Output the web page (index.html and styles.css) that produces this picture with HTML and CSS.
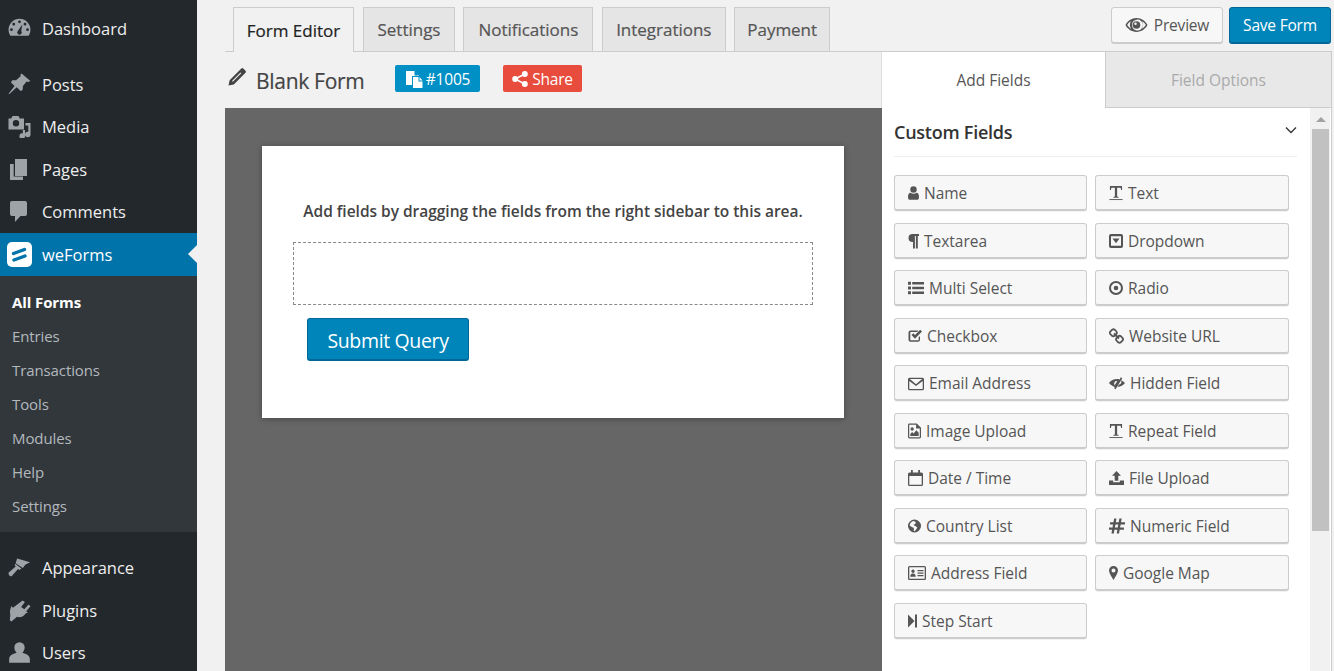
FILE: index.html
```html
<!DOCTYPE html>
<html lang="en">
<head>
<meta charset="utf-8">
<title>weForms</title>
<link rel="stylesheet" href="styles.css">
</head>
<body>
<aside class="sidebar">
  <nav class="menu first">
    <a class="mi"><svg class="mic" viewBox="0 0 20 20"><path fill-rule="evenodd" d="M10 1.500A9.500 9.500 0 0 0 .5 11c0 2 .6 3.700 1.600 5.200h15.800c1-1.500 1.600-3.200 1.600-5.200A9.500 9.500 0 0 0 10 1.500zM10 3a1.200 1.200 0 1 1 0 2.400A1.200 1.200 0 0 1 10 3zM5 5a1.200 1.200 0 1 1 0 2.400A1.200 1.200 0 0 1 5 5zm9.800 0a1.200 1.200 0 1 1 0 2.400 1.200 1.200 0 0 1 0-2.400zM3 9.800a1.200 1.200 0 1 1 0 2.400 1.200 1.200 0 0 1 0-2.400zm14 0a1.200 1.200 0 1 1 0 2.400 1.200 1.200 0 0 1 0-2.400zM12.500 6.500l-1 5.600a2 2 0 1 1-3 0z"/></svg><span>Dashboard</span></a>
  </nav>
  <nav class="menu second">
    <a class="mi"><svg class="mic" viewBox="0 0 20 20"><path d="M11.800.5l7.700 6.500-2 .8-1.300-.4-3.200 4-.3 3.300-1.700 1-3.400-3.300L1 18.500l-.5-.4 5.200-6.900-3.100-3 1.100-1.800 3.300-.2 4-3.300-.2-1.300z"/></svg><span>Posts</span></a>
    <a class="mi"><svg class="mic" viewBox="0 0 23 23"><path fill-rule="evenodd" d="M4.500 1h6l1.300 2.500H16v11H.5v-11h2.700zM8 5a3.200 3.200 0 1 0 0 6.400A3.200 3.200 0 0 0 8 5z"/><path d="M22.500 8v11.500a2.800 2.800 0 1 1-2.200-2.700v-6.300h-2.800V8zM17 15v6a2.800 2.800 0 1 1-2.200-2.700V15z"/></svg><span>Media</span></a>
    <a class="mi"><svg class="mis" viewBox="0 0 17 21"><path d="M5 0h12v17H5z"/><path d="M0 5h3.700v12.500H13V21H0z"/></svg><span>Pages</span></a>
    <a class="mi"><svg class="mis" viewBox="0 0 17 21"><path d="M2 0h13a2 2 0 0 1 2 2v11a2 2 0 0 1-2 2h-4.500L5 21v-6H2a2 2 0 0 1-2-2V2a2 2 0 0 1 2-2z"/></svg><span>Comments</span></a>
    <a class="mi current"><svg class="logo" viewBox="0 0 25 25"><rect width="25" height="25" rx="5" fill="#fff"/><path d="M6.500 11.500l11-4M7 18l11-4" stroke="#0073aa" stroke-width="3.400" stroke-linecap="round" fill="none"/></svg><span>weForms</span></a>
    <div class="submenu">
      <a class="si on">All Forms</a>
      <a class="si">Entries</a>
      <a class="si">Transactions</a>
      <a class="si">Tools</a>
      <a class="si">Modules</a>
      <a class="si">Help</a>
      <a class="si">Settings</a>
    </div>
  </nav>
  <nav class="menu third">
    <a class="mi"><svg class="mic" viewBox="0 0 24 20"><path d="M9.500.5l13.500 4-5 2.500-2.500 3.500-7.500-5zM7.500 6l6.500 5-2 1.500-1.500-1L3.500 19.500l-2.500-1.500-.5-2.500 7.500-6.500-1-1.500z"/></svg><span>Appearance</span></a>
    <a class="mi"><svg class="mic" viewBox="0 0 20 20"><path d="M12.700 1.200l2 1.300-3.300 4.500 2.800 2 3.600-4.300 1.800 1.700-3.800 4.300 1.500 1-2 .8c-1.500 2.500-4.500 4-7.500 3L3 19.500l-1.400-1 .4-5c-.8-2.500 0-5 1-7.500l1.300 1.700z"/></svg><span>Plugins</span></a>
    <a class="mi"><svg class="mic" viewBox="0 0 20 20"><path d="M10 1a4.500 4.500 0 0 1 4.500 4.700c0 2-1 3.500-2 4.500 3.500 1 6.500 2.300 6.500 5.500V19H1v-3.300c0-3.200 3-4.500 6.500-5.500-1-1-2-2.500-2-4.500A4.500 4.500 0 0 1 10 1z"/></svg><span>Users</span></a>
  </nav>
</aside>

<main class="main">
  <header class="topbar">
    <div class="tabs">
      <a class="tab active">Form Editor</a>
      <a class="tab t2">Settings</a>
      <a class="tab t3">Notifications</a>
      <a class="tab t4">Integrations</a>
      <a class="tab t5">Payment</a>
    </div>
    <div class="actions">
      <button class="btn preview"><svg class="eye" viewBox="0 0 24 16"><path fill-rule="evenodd" d="M12 .8C6.800.8 2.600 4 .5 8c2.100 4 6.300 7.200 11.500 7.200S21.400 12 23.500 8C21.400 4 17.200.8 12 .8zM12 2.500a5.700 5.700 0 1 1 0 11.200 5.700 5.700 0 0 1 0-11.200zM2.300 8c1-1.500 2.400-2.900 4-3.800a7 7 0 0 0 0 7.600C4.700 10.900 3.300 9.500 2.300 8zm15.400-3.800c1.600.9 3 2.300 4 3.800-1 1.500-2.400 2.900-4 3.800a7 7 0 0 0 0-7.600z"/><path fill-rule="evenodd" d="M12 4a4 4 0 1 0 0 8 4 4 0 0 0 0-8zm-1 1.500a1.300 1.300 0 1 1 0 2.600 1.300 1.300 0 0 1 0-2.600z"/></svg>Preview</button>
      <button class="btn save">Save Form</button>
    </div>
  </header>

  <div class="workspace">
    <section class="editor">
      <div class="titlebar">
        <svg class="pencil" viewBox="0 0 18 18"><path fill-rule="evenodd" d="M13.300.5a1.500 1.500 0 0 1 2 0l2.200 2.200a1.500 1.500 0 0 1 0 2L5.800 16.400.5 17.500l1.100-5.300zM12.500 4.500L4 13l.8.8L13.300 5.300z"/></svg>
        <h1 class="title">Blank Form</h1>
        <span class="badge id"><svg class="bi doc" viewBox="0 0 18 18"><path d="M1 1h8.500v4.500H14V6H7v9H1z"/><path fill-rule="evenodd" d="M8 7h5.500v4.500H17.500V18H8zm6.500 0l3 3.400h-3z"/></svg>#1005</span>
        <span class="badge share"><svg class="bi" viewBox="0 0 16 16"><circle cx="3.200" cy="8" r="3"/><circle cx="12.800" cy="3" r="3"/><circle cx="12.800" cy="13" r="3"/><path d="M3.200 8l9.600-5M3.200 8l9.600 5" stroke="#fff" stroke-width="1.600"/></svg>Share</span>
      </div>
      <div class="canvas">
        <div class="card">
          <p class="hint">Add fields by dragging the fields from the right sidebar to this area.</p>
          <div class="drop"></div>
          <button class="submit">Submit Query</button>
        </div>
      </div>
    </section>

    <aside class="panel">
      <div class="ptabs">
        <a class="ptab on">Add Fields</a>
        <a class="ptab off">Field Options</a>
      </div>
      <div class="pbody">
        <div class="pcontent">
          <div class="phead">
            <h2>Custom Fields</h2>
            <svg class="chev" viewBox="0 0 12 8"><path d="M1 1.500l5 5 5-5" fill="none" stroke="#333" stroke-width="1.300"/></svg>
          </div>
          <div class="fields">
            <a class="f"><svg class="i w11" viewBox="0 0 13 16"><path d="M6.500 0a3.800 3.800 0 1 1 0 7.600A3.800 3.800 0 0 1 6.500 0zM3 7.600c1 .9 2.200 1.300 3.500 1.300S9 8.500 10 7.600c2 .3 3 1.600 3 5 0 2.200-1 3.400-2.500 3.400h-8C1 16 0 14.800 0 12.600c0-3.400 1-4.700 3-5z"/></svg>Name</a>
            <a class="f"><svg class="i w14" viewBox="0 0 15 16"><path d="M1 .5h13v4.300h-1l-.6-2.500H8.700v9.500l1.600.5v.8H4.700v-.8l1.600-.5V2.300H2.600L2 4.800H1z"/><path d="M.5 15h14" stroke="currentColor" stroke-width="1"/></svg>Text</a>
            <a class="f"><svg class="i w11" viewBox="0 0 11 15"><path d="M4.500.5H11v1.900H9.800V15H7.900V2.400H6.900V15H5V8.500h-.5a4 4 0 0 1 0-8z"/></svg>Textarea</a>
            <a class="f"><svg class="i w14" viewBox="0 0 14 14"><path fill-rule="evenodd" d="M2 0h10a2 2 0 0 1 2 2v10a2 2 0 0 1-2 2H2a2 2 0 0 1-2-2V2a2 2 0 0 1 2-2zm0 2.300V11.700h10V2.300zm1.500 2.200h7L7 9.200z"/></svg>Dropdown</a>
            <a class="f"><svg class="i w16" viewBox="0 0 16 13"><path d="M0 .3h3v3H0zM0 5h3v3H0zM0 9.700h3v3H0zM4.200.6H16v2.400H4.200zM4.200 5.300H16v2.400H4.200zM4.200 10H16v2.400H4.200z"/></svg>Multi Select</a>
            <a class="f"><svg class="i w14" viewBox="0 0 14 14"><path fill-rule="evenodd" d="M7 0a7 7 0 1 1 0 14A7 7 0 0 1 7 0zm0 2a5 5 0 1 0 0 10A5 5 0 0 0 7 2zm0 2.700a2.300 2.300 0 1 1 0 4.600 2.300 2.300 0 0 1 0-4.600z"/></svg>Radio</a>
            <a class="f"><svg class="i w14" viewBox="0 0 14 14"><path d="M2.500 1.500h8l-1.400 1.400H2.300V11.300h8.300V8.400L12 7v3.800a2 2 0 0 1-2 2H2.500a2 2 0 0 1-2-2V3.500a2 2 0 0 1 2-2z"/><path d="M3.500 6l1.900-1.800L7 6l5.200-5.200L14 2.600 7 9.800z"/></svg>Checkbox</a>
            <a class="f"><svg class="i w15" viewBox="0 0 15 15"><path d="M3.200 1.200L1.300 3a2 2 0 0 0 0 2.500L3 7.300a2 2 0 0 0 2.600 0l1.800-1.800a2 2 0 0 0 0-2.500L5.700 1.200a2 2 0 0 0-2.500 0zM9.300 7.700l-1.800 1.800a2 2 0 0 0 0 2.500l1.700 1.800a2 2 0 0 0 2.600 0l1.800-1.800a2 2 0 0 0 0-2.500l-1.800-1.800a2 2 0 0 0-2.500 0zM5 5l5 5" fill="none" stroke="currentColor" stroke-width="1.800"/></svg>Website URL</a>
            <a class="f"><svg class="i w16 mt2" viewBox="0 0 16 13"><path fill-rule="evenodd" d="M1.500.2h13a1.500 1.500 0 0 1 1.500 1.500v9.600a1.500 1.500 0 0 1-1.500 1.500h-13A1.500 1.500 0 0 1 0 11.300V1.700A1.500 1.500 0 0 1 1.500.2zm-.2 3.200v7.800c0 .2.100.4.300.4h12.800c.2 0 .3-.2.300-.4V3.400L8 8.600zM1.900 1.500L8 6.700l6.100-5.200z"/></svg>Email Address</a>
            <a class="f"><svg class="i w16" viewBox="0 0 16 13"><path fill-rule="evenodd" d="M8 2.600c.9 0 1.800.1 2.600.4L11.800.8l1.500.9-6.700 11-1.500-.9.700-1.300C3.400 9.600 1.300 8.300 0 6.500 1.700 4.100 4.700 2.600 8 2.600zM7.800 4.600A2.500 2.500 0 0 0 5.700 8.700L8 5z"/><path d="M11.800 3.800C13.600 4.400 15 5.400 16 6.500c-1.600 2.300-4.300 3.700-7.500 3.900l1.300-2.100c1.600-.4 2.500-1.200 2.600-2.700z"/></svg>Hidden Field</a>
            <a class="f"><svg class="i w13" viewBox="0 0 14 16"><path fill-rule="evenodd" d="M1.500 0h8L14 4.500v10a1.500 1.500 0 0 1-1.500 1.500h-11A1.500 1.500 0 0 1 0 14.500v-13A1.500 1.500 0 0 1 1.500 0zm-.2 1.300v13.400h11.400V5.300H8.700V1.300zM4.500 4a1.800 1.800 0 1 1 0 3.600 1.800 1.800 0 0 1 0-3.600zM2.500 13.500v-2.300l2-2 1.500 1.500 3-3.500 2.500 2.800v3.500z"/></svg>Image Upload</a>
            <a class="f"><svg class="i w14" viewBox="0 0 15 16"><path d="M1 .5h13v4.300h-1l-.6-2.500H8.700v9.500l1.600.5v.8H4.700v-.8l1.600-.5V2.300H2.600L2 4.800H1z"/><path d="M.5 15h14" stroke="currentColor" stroke-width="1"/></svg>Repeat Field</a>
            <a class="f"><svg class="i w15" viewBox="0 0 15 16"><path fill-rule="evenodd" d="M3 0h1.800v2.500h5.400V0H12v2.500h1.500A1.500 1.500 0 0 1 15 4v10.500a1.500 1.500 0 0 1-1.500 1.500h-12A1.500 1.500 0 0 1 0 14.500V4a1.500 1.500 0 0 1 1.500-1.500H3zM1.300 6v8.700h12.400V6z"/></svg>Date / Time</a>
            <a class="f"><svg class="i w15" viewBox="0 0 15 14"><path d="M7.500 0l4.500 4.800H9.300v5H5.700v-5H3zM0 9.500h4.200v1.700h6.600V9.500H15V14H0z"/></svg>File Upload</a>
            <a class="f"><svg class="i w13" viewBox="0 0 14 14"><path fill-rule="evenodd" d="M7 0a7 7 0 1 1 0 14A7 7 0 0 1 7 0zM5.500 1.700c-2 .6-3.700 2.500-3.700 4.800l2.200 1.500 1.500.5 1 1.500-.5 2 1.300.7 2-2.700.7-1.500-2-1.500-1.500-.5-.5-1 1.500-.5 1-1.700-1-1.100z"/></svg>Country List</a>
            <a class="f"><svg class="i w16" viewBox="0 0 15 14"><path d="M4.800 0h2.200l-.6 3.500h2.700L9.700 0h2.200l-.6 3.500H15v2.200h-4.100l-.5 2.600H14v2.200h-4l-.6 3.500H7.200l.6-3.500H5.100L4.500 14H2.300l.6-3.500H0V8.300h3.300l.5-2.600H1V3.500h3.200zM6 5.700l-.5 2.600h2.700l.5-2.600z"/></svg>Numeric Field</a>
            <a class="f"><svg class="i w18" viewBox="0 0 18 14"><path fill-rule="evenodd" d="M1.500 0h15A1.500 1.500 0 0 1 18 1.500v11a1.500 1.500 0 0 1-1.500 1.500h-15A1.500 1.500 0 0 1 0 12.500v-11A1.500 1.500 0 0 1 1.500 0zm-.2 1.300v11.400h15.400V1.300zM5 3.500a1.700 1.700 0 1 1 0 3.400 1.700 1.700 0 0 1 0-3.400zM2.300 10.700c0-2 .6-3.300 2.700-3.300s2.700 1.300 2.700 3.300zM9.500 4h6v1.200h-6zM9.500 6.500h6v1.200h-6zM9.500 9h6v1.200h-6z"/></svg>Address Field</a>
            <a class="f"><svg class="i w9" viewBox="0 0 9 14"><path fill-rule="evenodd" d="M4.500 0A4.500 4.500 0 0 1 9 4.500C9 7.500 6 11 4.500 14 3 11 0 7.500 0 4.500A4.500 4.500 0 0 1 4.500 0zm0 2.500a2 2 0 1 0 0 4 2 2 0 0 0 0-4z"/></svg>Google Map</a>
            <a class="f"><svg class="i w9" viewBox="0 0 9 14"><path d="M0 .5l6.500 6.500L0 13.500zM7 .5h2v13H7z"/></svg>Step Start</a>
          </div>
        </div>
        <div class="scrollbar">
          <span class="sb-arrow"></span>
          <span class="sb-thumb"></span>
        </div>
      </div>
    </aside>
  </div>
</main>
</body>
</html>
```

FILE: styles.css
```css
* { box-sizing: border-box; }
html, body { height: 100%; margin: 0; overflow: hidden; }
body {
  display: flex;
  background: #f1f1f1;
  font-family: "Open Sans", "Noto Sans", sans-serif;
  color: #444;
}
h1, h2, p { margin: 0; font-weight: 400; }
button { font-family: inherit; cursor: pointer; }

/* sidebar */
.sidebar { width: 197px; flex: none; height: 671px; background: #23282d; overflow: hidden; }
.menu.first { padding-top: 7px; }
.menu.second { padding-top: 13.500px; }
.menu.third { padding-top: 15px; }
.mi {
  display: flex; align-items: center; height: 42.5px; padding-left: 8px;
  color: #eee; font-size: 16.500px; letter-spacing: -.02px; position: relative;
}
.mic { width: 23px; height: 23px; margin-right: 11px; flex: none; fill: #9ea3a8; }
.mis { width: 17px; height: 21px; margin: 0 15px 0 2px; flex: none; fill: #9ea3a8; }
.logo { width: 25px; height: 25px; margin: 0 10px 0 -1px; flex: none; }
.current { background: #0073aa; color: #fff; }
.current::after {
  content: ""; position: absolute; right: 0; top: 12px;
  border: 9px solid transparent; border-right-color: #f1f1f1; border-left: 0;
}
.submenu { background: #32373c; padding: 9px 0; }
.si { display: flex; align-items: center; height: 34px; padding-left: 12px; font-size: 15px; letter-spacing: -.1px; color: #b4b9be; }
.si.on { color: #fff; font-weight: 700; }

/* main */
.main { flex: 1; min-width: 0; height: 671px; padding-left: 28px; padding-right: 2px; display: flex; flex-direction: column; }
.topbar { display: flex; justify-content: space-between; height: 52px; flex: none; border-bottom: 1px solid #ccc; }
.tabs { display: flex; padding: 7px 0 0 8px; }
.tab {
  height: 44px; display: flex; align-items: center; justify-content: center;
  border: 1px solid #ccc; border-bottom: 0; background: #e5e5e5;
  color: #555; font-size: 17px; font-weight: 500; letter-spacing: -.02px;
  -webkit-text-stroke: .2px currentColor;
  margin-right: 8.400px; width: 92px;
}
.tab.active { width: 121px; height: 45px; background: #f1f1f1; color: #222; margin-right: 9px; }
.t3 { width: 130px; }
.t4 { width: 124px; }
.t5 { width: 96px; }
.actions { display: flex; gap: 6px; padding-top: 7px; margin-right: 1px; }
.btn { height: 36px; border-radius: 3px; font-size: 15.500px; letter-spacing: -.2px; padding: 0; display: flex; align-items: center; justify-content: center; }
.preview { width: 112px; background: #f7f7f7; border: 1px solid #ccc; box-shadow: 0 1px 0 #ccc; color: #555; }
.eye { width: 23px; height: 16px; margin-right: 6px; fill: #555; }
.save { width: 102px; background: #0085ba; border: 1px solid #006799; box-shadow: 0 1px 0 #006799; color: #fff; }

.workspace { flex: 1; min-height: 0; display: flex; }
.editor { width: 657px; flex: none; display: flex; flex-direction: column; }
.titlebar { height: 56px; flex: none; display: flex; align-items: center; padding-left: 3px; border-right: 1px solid #ddd; }
.pencil { width: 18px; height: 18px; fill: #444; margin: -6px 10px 0 0; }
.title { font-size: 21px; font-weight: 500; letter-spacing: -.3px; color: #444; width: 139px; white-space: nowrap; margin-top: 2px; -webkit-text-stroke: .2px currentColor; }
.badge { height: 27px; margin-top: -3px; display: flex; align-items: center; justify-content: center; border-radius: 2px; color: #fff; font-size: 15.500px; letter-spacing: -.2px; }
.bi { width: 16px; height: 16px; fill: #fff; margin-right: 4px; }
.doc { width: 18px; height: 18px; margin-right: 3px; }
.id { width: 85px; background: #0090c5; margin-right: 23px; }
.share { width: 79px; background: #e74c3c; }
.canvas { flex: 1; background: #666; padding: 38px 38px 0 37px; }
.card {
  width: 582px; height: 272px; background: #fff; box-shadow: 0 1px 6px rgba(0,0,0,.3);
  padding: 55px 31px 0;
}
.hint { font-size: 15.500px; font-weight: 600; letter-spacing: -.02px; color: #444; text-align: center; line-height: 20px; white-space: nowrap; }
.drop { height: 63px; margin-top: 21px; border: 1px dashed #888; }
.submit {
  display: block; width: 162px; height: 43px; margin: 13px 0 0 14px; background: #0085ba;
  border: 1px solid #006799; border-bottom-width: 2px; border-radius: 3px; color: #fff;
  font-size: 19.500px; letter-spacing: -.35px; padding: 2px 0 0;
}

/* panel */
.panel { flex: 1; min-width: 0; background: #fff; display: flex; flex-direction: column; border-right: 1px solid #ccc; }
.ptabs { display: flex; height: 56px; flex: none; }
.ptab { display: flex; align-items: center; justify-content: center; font-size: 15.500px; letter-spacing: -.02px; }
.ptab.on { width: 223px; color: #555; }
.ptab.off { flex: 1; background: #e8e8e8; color: #aaa; border-left: 1px solid #ccc; border-bottom: 1px solid #ccc; }
.pbody { flex: 1; min-height: 0; display: flex; }
.pcontent { width: 428px; padding: 0 13px 0 12px; flex: none; }
.phead { height: 49px; display: flex; justify-content: space-between; align-items: center; border-bottom: 1px solid #eee; }
.phead h2 { font-size: 18px; font-weight: 600; letter-spacing: -.25px; color: #333; }
.chev { width: 12px; height: 8px; margin: -4px 0 0; }
.fields { display: grid; grid-template-columns: 193px 194px; column-gap: 8px; row-gap: 12.500px; padding-top: 18.400px; }
.f {
  height: 36px; display: flex; align-items: center; padding: 1px 0 0 13px;
  background: #f7f7f7; border: 1px solid #ccc; border-bottom-width: 2px; border-radius: 3px;
  box-shadow: 0 1px 0 rgba(0,0,0,.05);
  margin-bottom: -1px;
  font-size: 15.500px; letter-spacing: -.02px; color: #555;
}
.i { height: 16px; margin-right: 5px; fill: #555; color: #555; flex: none; }
.w9 { width: 9px; } .w11 { width: 11px; } .w13 { width: 13px; } .w14 { width: 14px; }
.w15 { width: 15px; } .w16 { width: 16px; } .w18 { width: 18px; }
.mt2 { margin-top: 2px; }
.scrollbar { width: 20px; flex: none; background: #f1f1f1; display: flex; flex-direction: column; align-items: center; padding: 9px 0 0 1px; margin-right: 1px; }
.sb-arrow { width: 0; height: 0; flex: none; border: 5px solid transparent; border-top: 0; border-bottom: 5px solid #a3a3a3; }
.sb-thumb { width: 17px; height: 402px; margin-top: 7px; background: #c1c1c1; flex: none; }
```
